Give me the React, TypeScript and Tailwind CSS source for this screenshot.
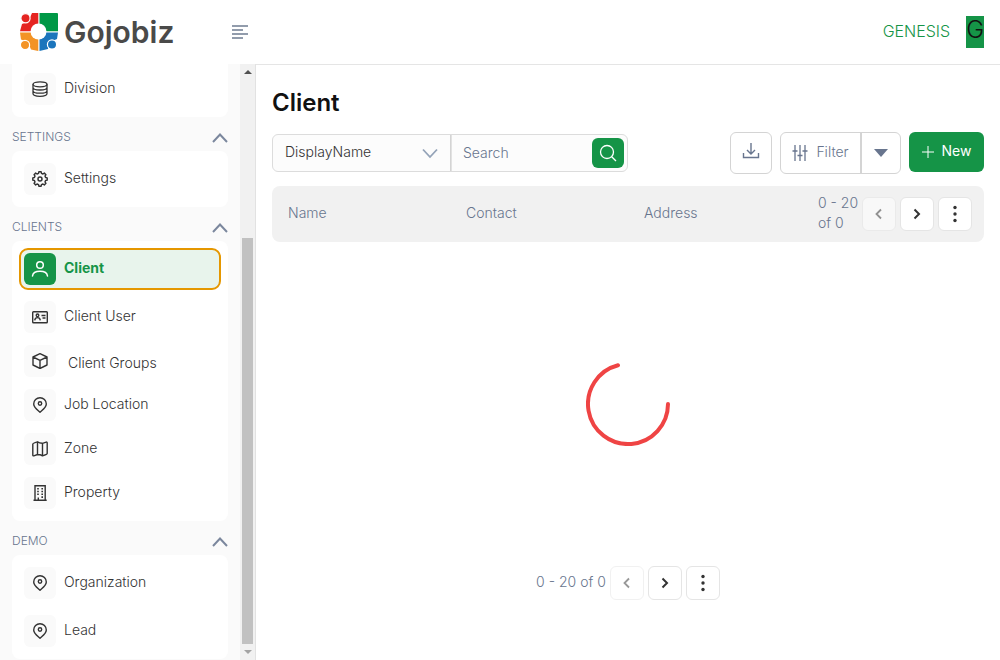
import type { ReactNode } from "react";

type Item = { label: string; icon: ReactNode; active?: boolean; nested?: boolean };
type Group = { title: string; items: Item[] };

const pin = (
  <svg width="16" height="16" viewBox="0 0 16 16" fill="none" stroke="currentColor" strokeWidth="1.4">
    <path d="M8 15.2C6 13.300 1.700 10.600 1.700 7a6.300 6.300 0 0 1 12.600 0c0 3.600-4.300 6.300-6.300 8.200Z" strokeLinejoin="round" />
    <circle cx="8" cy="6.500" r="1.700" />
  </svg>
);

const gear = (
  <svg width="16" height="16" viewBox="0 0 24 24" fill="none" stroke="currentColor" strokeWidth="2.200" strokeLinejoin="round">
    <path d="M9.800 3.600 10.300 1.200h3.400l.5 2.400 2.200.9 2.100-1.400 2.400 2.400-1.400 2.100.9 2.200 2.400.5v3.400l-2.400.5-.9 2.200 1.400 2.100-2.400 2.400-2.100-1.400-2.200.9-.5 2.400h-3.400l-.5-2.400-2.200-.9-2.100 1.400-2.400-2.400 1.400-2.100-.9-2.200-2.400-.5v-3.400l2.400-.5.9-2.200-1.400-2.100 2.400-2.400 2.100 1.400z" />
    <circle cx="12" cy="12" r="3" />
  </svg>
);

const database = (
  <svg width="16" height="16" viewBox="0 0 16 16" fill="none" stroke="currentColor" strokeWidth="1.300">
    <ellipse cx="8" cy="3.300" rx="7" ry="2.500" />
    <path d="M1 3.300v9.300c0 1.500 3.100 2.700 7 2.700s7-1.200 7-2.700V3.300M1 6.500c0 1.500 3.100 2.500 7 2.500s7-1 7-2.500M1 9.700c0 1.500 3.100 2.500 7 2.500s7-1 7-2.500" />
  </svg>
);

const person = (
  <svg width="18" height="18" viewBox="0 0 18 18" fill="none" stroke="currentColor" strokeWidth="1.500" strokeLinecap="round">
    <circle cx="9" cy="5" r="3.300" />
    <path d="M1.500 16c.4-3.300 3.300-4.700 7.500-4.700s7.100 1.400 7.500 4.700" />
  </svg>
);

const card = (
  <svg width="16" height="16" fill="none" stroke="currentColor" strokeWidth="1.400">
    <rect x="0.700" y="2.700" width="14.600" height="11" rx="0.800" />
    <circle cx="5.500" cy="6.300" r="1.300" />
    <path d="M2.700 11.400c.2-1.900 1.200-2.800 2.800-2.800s2.600.9 2.800 2.800M9.500 6.500h4M10.500 9h3" />
  </svg>
);

const box = (
  <svg width="16" height="16" fill="none" stroke="currentColor" strokeWidth="1.400" strokeLinejoin="round">
    <path d="m8 .7 7 3.300v8l-7 3.500L1 12V4zM1 4l7 3.300L15 4M8 7.300v8.200" />
  </svg>
);

const map = (
  <svg width="16" height="16" fill="none" stroke="currentColor" strokeWidth="1.400" strokeLinejoin="round">
    <path d="M.8 3Q.8 2.300 5.500.8q2 1.600 5 1.500l3.700-1.200q1-.2 1 .8v10.600q0 .8-4.700 2.300-2-1.300-5-1.300l-3.700 1.300q-1 .2-1-.8zM5.500.8v12.700M10.500 2.300v12.500" />
  </svg>
);

const building = (
  <svg width="16" height="16" fill="none" stroke="currentColor" strokeWidth="1.400">
    <path d="M3 15V.7h10.200V15M1.500 15.200h13.200M6.300 15v-2.500" />
    <path d="M5.200 3.700h1.600M9.400 3.700H11M5.200 6.500h1.600M9.400 6.500H11M5.200 9.300h1.600M9.400 9.300H11M9.400 12.100H11" strokeWidth="1.600" />
  </svg>
);

const groups: Group[] = [
  { title: "", items: [{ label: "Division", icon: database }] },
  { title: "SETTINGS", items: [{ label: "Settings", icon: gear }] },
  {
    title: "CLIENTS",
    items: [
      { label: "Client", icon: person, active: true },
      { label: "Client User", icon: card },
      { label: "Client Groups", icon: box, nested: true },
      { label: "Job Location", icon: pin },
      { label: "Zone", icon: map },
      { label: "Property", icon: building },
    ],
  },
  {
    title: "DEMO",
    items: [
      { label: "Organization", icon: pin },
      { label: "Lead", icon: pin },
    ],
  },
];

function Logo() {
  return (
    <svg className="shrink-0" width="38" height="38" viewBox="0 0 38 38" aria-hidden="true">
      <path d="M18.300 0H12Q10 5 8 8.500L2 11 0 18.300h18.300z" fill="#e52421" />
      <path d="M19.500 0H37a1 1 0 0 1 1 1v17.300H19.500z" fill="#009846" />
      <path d="M0 19.500h18.300V38L11 36.500 8 29 1 26.500z" fill="#f39325" />
      <path d="M19.500 19.500H38L37 26l-7 3-2 7-8.500 2z" fill="#1b75bc" />
      <g stroke="#fff" strokeWidth="1.200">
        <circle cx="5.500" cy="5.200" r="4.600" fill="#e52421" />
        <circle cx="5" cy="32" r="4.600" fill="#f39325" />
        <circle cx="32" cy="31.500" r="4.600" fill="#1b75bc" />
      </g>
      <circle cx="18.500" cy="18.500" r="8" fill="#fff" />
    </svg>
  );
}

function Pager({ range, total, wrap }: { range: string; total: string; wrap?: boolean }) {
  const base = "flex size-[34px] shrink-0 items-center justify-center rounded-md border border-[#e5e5e5] bg-white text-[#333]";
  return (
    <div className="flex items-center gap-1 text-sm leading-5 text-[#68758e]">
      <span className={wrap ? "flex w-10 flex-col pb-[2px] whitespace-nowrap" : "pb-[2px] whitespace-nowrap"}>
        <span>{range} </span>
        <span>{total}</span>
      </span>
      <button className={`${base} opacity-50`} aria-label="Previous page" disabled>
        <svg width="16" height="16" fill="none" stroke="currentColor" strokeWidth="1.800"><path d="M10 3.500 5.500 8l4.500 4.500" /></svg>
      </button>
      <button className={base} aria-label="Next page">
        <svg width="16" height="16" fill="none" stroke="currentColor" strokeWidth="2"><path d="M5.500 3.500 10 8l-4.500 4.500" /></svg>
      </button>
      <button className={base} aria-label="More options">
        <svg width="18" height="18" fill="currentColor"><circle cx="9" cy="2.500" r="1.700" /><circle cx="9" cy="9" r="1.700" /><circle cx="9" cy="15.500" r="1.700" /></svg>
      </button>
    </div>
  );
}

function Sidebar() {
  return (
    <aside className="flex w-64 shrink-0 border-r border-[#e2e2e2] bg-[#fafafa]">
      <nav className="min-w-0 flex-1 overflow-hidden px-3">
        {groups.map((group) => (
          <section key={group.title}>
            {group.title && (
              <button className="flex h-[34px] w-full items-center justify-between pt-2 text-xs text-[#68758e]">
                <span className="pb-[2px]">{group.title}</span>
                <svg width="16" height="16" fill="none" stroke="#7b879d" strokeWidth="2"><path d="M1 12 8 4.500 15 12" /></svg>
              </button>
            )}
            <ul className={`bg-white px-2 pb-2 ${group.title ? "rounded-lg pt-2" : "rounded-b-lg pt-[5px]"}`}>
              {group.items.map((item, i) => (
                <li key={item.label} className={i === 0 ? "" : i === 1 ? "mt-2" : "mt-1"}>
                  <a
                    href="#"
                    className={`flex h-10 items-center rounded-lg px-1 text-sm ${
                      item.active ? "bg-[#e8f4ec] font-bold text-[#159447] outline-2 -outline-offset-1 outline-[#e59700]" : "text-[#333]"
                    }`}
                  >
                    <span className={`flex size-8 items-center justify-center rounded-md ${item.active ? "bg-[#159447] text-white" : "bg-[#fafafa]"}`}>
                      {item.icon}
                    </span>
                    <span className={item.nested ? "pt-1 pl-3" : "pb-[2px] pl-2"}>{item.label}</span>
                  </a>
                </li>
              ))}
            </ul>
          </section>
        ))}
      </nav>
      <div className="flex w-[15px] flex-col items-center bg-[#f1f1f1] py-[6px]" aria-hidden="true">
        <svg width="8" height="4"><path d="M0 4 4 0l4 4z" fill="#505050" /></svg>
        <div className="flex-[164]" />
        <div className="w-[11px] flex-[406] bg-[#c1c1c1]" />
        <svg className="mt-[6px]" width="8" height="4"><path d="M0 0h8L4 4z" fill="#a3a3a3" /></svg>
      </div>
    </aside>
  );
}

export default function App() {
  return (
    <div className="flex h-screen flex-col overflow-hidden bg-white font-['Inter',sans-serif] font-light text-[#111]">
      <header className="flex h-16 shrink-0 items-center justify-between pr-4 pl-5">
        <div className="flex items-center">
          <Logo />
          <span className="w-[174px] pl-[6px] text-3xl font-semibold text-[#4a4a49]">Gojobiz</span>
          <button aria-label="Toggle menu" className="text-[#6f7c91]">
            <svg width="16" height="14" fill="none" stroke="currentColor" strokeWidth="1.300"><path d="M0 1h16M0 5h11M0 9h16M0 13h11" /></svg>
          </button>
        </div>
        <div className="flex items-center gap-4">
          <span className="pb-[3px] text-base text-[#159447]">GENESIS</span>
          <button className="h-8 bg-[#159447] pb-1 text-2xl leading-7">G</button>
        </div>
      </header>
      <div className="flex min-h-0 flex-1">
        <Sidebar />
        <main className="flex min-w-0 flex-1 flex-col border-t border-[#e5e5e5] px-4">
          <h1 className="pt-[22px] text-2xl leading-8 font-semibold">Client</h1>
          <div className="mt-[13px] flex items-start justify-between">
            <div className="mt-[2px] flex h-[38px] rounded-md border border-[#dcdcdc] bg-[#fcfcfc] text-sm">
              <div className="relative flex w-[178px] border-r border-[#d4d4d4]">
                <select aria-label="Search field" className="w-full appearance-none pb-[2px] pl-3 text-[#333]">
                  <option>DisplayName</option>
                </select>
                <svg className="pointer-events-none absolute top-[10px] right-3" width="16" height="16" fill="none" stroke="#94a3b8" strokeWidth="1.800"><path d="M1 4.500 8 12l7-7.500" /></svg>
              </div>
              <div className="flex items-center pr-[3px]">
                <input aria-label="Search" placeholder="Search" className="h-9 w-[141px] border-l border-[#e2e2e2] pb-[2px] pl-[11px] outline-none placeholder:text-[#68758e]" />
                <button aria-label="Run search" className="flex h-[30px] w-8 items-center justify-center rounded-md bg-[#159447] text-white">
                  <svg width="18" height="18" fill="none" stroke="currentColor" strokeWidth="1.300"><circle cx="8" cy="8" r="6.500" /><path d="m12.700 12.700 4.300 4.300" /></svg>
                </button>
              </div>
            </div>
            <div className="flex items-start gap-2 text-sm text-[#68758e]">
              <button aria-label="Download" className="flex size-[42px] items-center justify-center rounded-md border border-[#d4d4d4] pb-1">
                <svg width="18" height="18" fill="none" stroke="currentColor" strokeWidth="1.400"><path d="M9 1v11M5 8l4 4 4-4M1.500 11v4.500h15V11" /></svg>
              </button>
              <div className="flex h-[42px] rounded-md border border-[#d4d4d4]">
                <button className="flex w-[81px] items-center justify-center gap-2 border-r-2 border-[#d4d4d4]">
                  <svg width="16" height="16" fill="none" stroke="currentColor" strokeWidth="1.300"><path d="M3 0v16M8 0v16M13 0v16M.5 6h5M5.500 10.500h5M10.500 6h5" /></svg>
                  <span className="pb-[2px]">Filter</span>
                </button>
                <button aria-label="Filter options" className="flex w-[38px] items-center justify-center">
                  <svg width="14" height="8"><path d="M0 0h14L7 8z" fill="currentColor" /></svg>
                </button>
              </div>
              <button className="flex h-10 w-[75px] items-center justify-center gap-2 rounded-md bg-[#159447] font-normal text-white">
                <svg width="12" height="12" fill="none" stroke="currentColor"><path d="M6 0v12M0 6h12" /></svg>
                <span className="pb-[2px]">New</span>
              </button>
            </div>
          </div>
          <table className="mt-3 w-full table-fixed text-left text-sm text-[#68758e]">
            <thead>
              <tr className="h-14 bg-[#f1f1f1]">
                <th className="rounded-l-lg pb-[2px] pl-4 font-light">Name</th>
                <th className="pb-[2px] pl-4 font-light">Contact</th>
                <th className="pb-[2px] pl-4 font-light">Address</th>
                <th className="rounded-r-lg pr-3 font-light">
                  <div className="flex justify-end"><Pager range="0 - 20" total="of 0" wrap /></div>
                </th>
              </tr>
            </thead>
          </table>
          <div className="flex flex-1 items-center justify-center" role="status" aria-label="Loading">
            <svg width="84" height="84" fill="none" stroke="#ef4444" strokeWidth="4" strokeLinecap="round"><path d="M82 42A40 40 0 1 1 32 3.300" /></svg>
          </div>
          <div className="flex justify-center pb-[60px]"><Pager range="0 - 20" total="of 0" /></div>
        </main>
      </div>
    </div>
  );
}
